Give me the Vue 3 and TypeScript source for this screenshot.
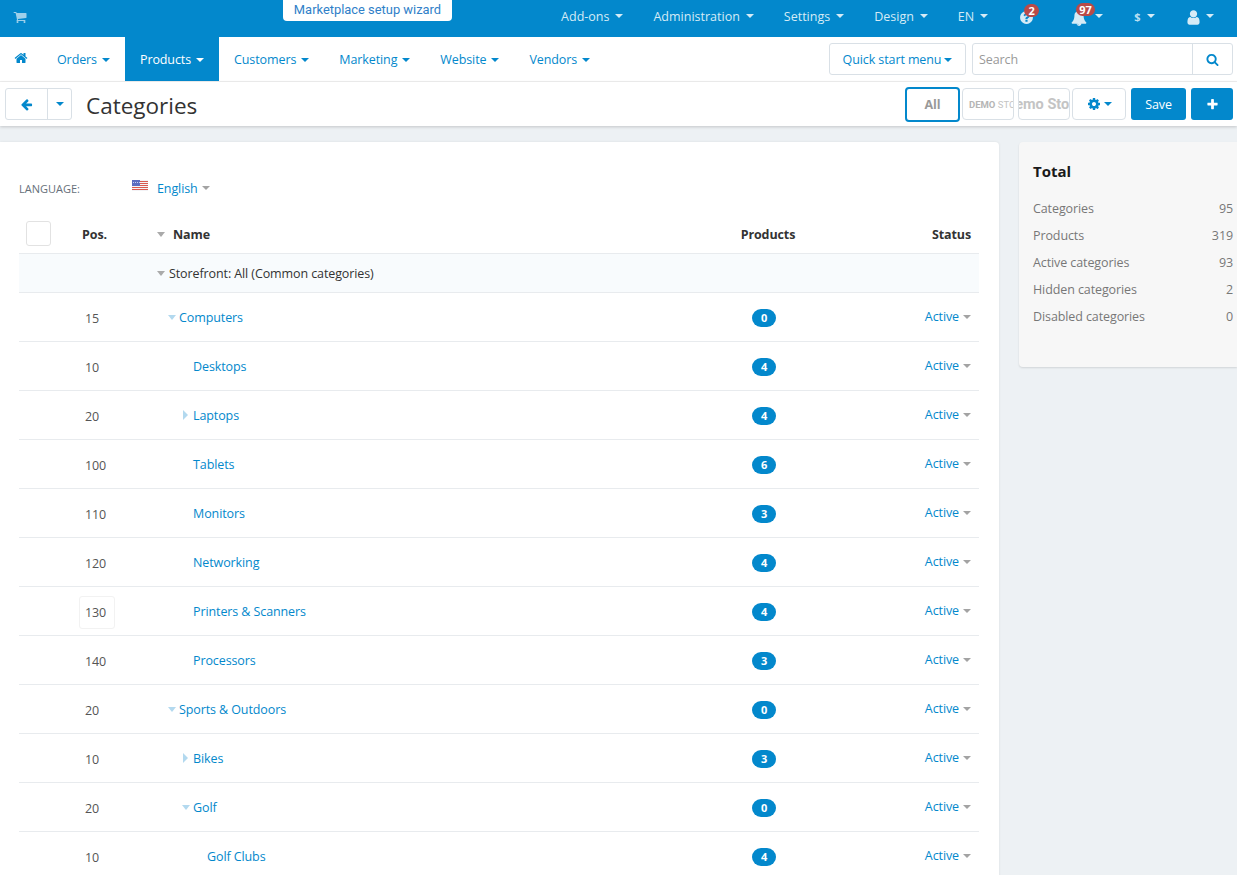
<script setup lang="ts">
interface CategoryRow {
  pos: number;
  name: string;
  level: number;
  products: number;
  toggle?: "open" | "closed";
  focused?: boolean;
}

const adminMenu = ["Add-ons", "Administration", "Settings", "Design", "EN"];
const mainMenu = ["Orders", "Products", "Customers", "Marketing", "Website", "Vendors"];

const rows: CategoryRow[] = [
  { pos: 15, name: "Computers", level: 0, products: 0, toggle: "open" },
  { pos: 10, name: "Desktops", level: 1, products: 4 },
  { pos: 20, name: "Laptops", level: 1, products: 4, toggle: "closed" },
  { pos: 100, name: "Tablets", level: 1, products: 6 },
  { pos: 110, name: "Monitors", level: 1, products: 3 },
  { pos: 120, name: "Networking", level: 1, products: 4 },
  { pos: 130, name: "Printers & Scanners", level: 1, products: 4, focused: true },
  { pos: 140, name: "Processors", level: 1, products: 3 },
  { pos: 20, name: "Sports & Outdoors", level: 0, products: 0, toggle: "open" },
  { pos: 10, name: "Bikes", level: 1, products: 3, toggle: "closed" },
  { pos: 20, name: "Golf", level: 1, products: 0, toggle: "open" },
  { pos: 10, name: "Golf Clubs", level: 2, products: 4 },
];

const totals = [
  { label: "Categories", value: 95 },
  { label: "Products", value: 319 },
  { label: "Active categories", value: 93 },
  { label: "Hidden categories", value: 2 },
  { label: "Disabled categories", value: 0 },
];

const icons = {
  cart: "M704 1536q0 52-38 90t-90 38-90-38-38-90 38-90 90-38 90 38 38 90zm896 0q0 52-38 90t-90 38-90-38-38-90 38-90 90-38 90 38 38 90zm128-1088v512q0 24-16.500 42.500t-40.500 21.500l-1044 122q13 60 13 70 0 16-24 64h920q26 0 45 19t19 45-19 45-45 19h-1024q-26 0-45-19t-19-45q0-11 8-31.500t16-36 21.500-40 15.500-29.500l-177-823h-204q-26 0-45-19t-19-45 19-45 45-19h256q16 0 28.500 6.500t19.500 15.500 13 24.500 8 26 5.500 29.500 4.500 26h1201q26 0 45 19t19 45z",
  home: "M1472 992v480q0 26-19 45t-45 19h-384v-384h-256v384h-384q-26 0-45-19t-19-45v-480q0-1 .5-3t.5-3l575-474 575 474q1 2 1 6zm223-69l-62 74q-8 9-21 11h-3q-13 0-21-7l-692-577-692 577q-12 8-24 7-13-2-21-11l-62-74q-8-10-7-23.500t11-21.500l719-599q32-26 76-26t76 26l244 204v-195q0-14 9-23t23-9h192q14 0 23 9t9 23v408l219 182q10 8 11 21.500t-7 23.500z",
  back: "M1664 896v128q0 53-32.500 90.500t-84.500 37.500h-704l293 294q38 36 38 90t-38 90l-75 76q-37 37-90 37-52 0-91-37l-651-652q-37-37-37-90 0-52 37-91l651-650q38-38 91-38 52 0 90 38l75 74q38 38 38 91t-38 91l-293 293h704q52 0 84.500 37.500t32.500 90.500z",
  search: "M1216 832q0-185-131.500-316.500t-316.500-131.500-316.500 131.500-131.500 316.500 131.500 316.500 316.500 131.500 316.500-131.500 131.500-316.500zm512 832q0 52-38 90t-90 38q-54 0-90-38l-343-342q-179 124-399 124-143 0-273.500-55.500t-225-150-150-225-55.500-273.500 55.500-273.500 150-225 225-150 273.500-55.500 273.500 55.500 225 150 150 225 55.500 273.500q0 220-124 399l343 343q37 37 37 90z",
  plus: "M1600 736v192q0 40-28 68t-68 28h-416v416q0 40-28 68t-68 28h-192q-40 0-68-28t-28-68v-416h-416q-40 0-68-28t-28-68v-192q0-40 28-68t68-28h416v-416q0-40 28-68t68-28h192q40 0 68 28t28 68v416h416q40 0 68 28t28 68z",
  cog: "M1152 896q0-106-75-181t-181-75-181 75-75 181 75 181 181 75 181-75 75-181zm512-109v222q0 12-8 23t-20 13l-185 28q-19 54-39 91 35 50 107 138 10 12 10 25t-9 23q-27 37-99 108t-94 71q-12 0-26-9l-138-108q-44 23-91 38-16 136-29 186-7 28-36 28h-222q-14 0-24.500-8.500t-11.500-21.500l-28-184q-49-16-90-37l-141 107q-10 9-25 9-14 0-25-11-126-114-165-168-7-10-7-23 0-12 8-23 15-21 51-66.500t54-70.500q-27-50-41-99l-183-27q-13-2-21-12.500t-8-23.500v-222q0-12 8-23t19-13l186-28q14-46 39-92-40-57-107-138-10-12-10-24 0-10 9-23 26-36 98.500-107.500t94.500-71.500q13 0 26 10l138 107q44-23 91-38 16-136 29-186 7-28 36-28h222q14 0 24.500 8.500t11.500 21.500l28 184q49 16 90 37l142-107q9-9 24-9 13 0 25 10 129 119 165 170 7 8 7 22 0 12-8 23-15 21-51 66.500t-54 70.500q26 50 41 98l183 28q13 2 21 12.500t8 23.500z",
  bell: "M912 1696q0-16-16-16-59 0-101.500-42.500t-42.500-101.500q0-16-16-16t-16 16q0 73 51.500 124.500t124.500 51.500q16 0 16-16zm816-288q0 52-38 90t-90 38h-448q0 106-75 181t-181 75-181-75-75-181h-448q-52 0-90-38t-38-90q50-42 91-88t85-119.500 74.500-158.500 50-206 19.500-260q0-152 117-282.500t307-158.500q-8-19-8-39 0-40 28-68t68-28 68 28 28 68q0 20-8 39 190 28 307 158.500t117 282.500q0 139 19.500 260t50 206 74.500 158.500 85 119.500 91 88z",
  user: "M1536 1399q0 109-62.500 187t-150.500 78h-854q-88 0-150.500-78t-62.500-187q0-85 8.500-160.500t31.500-152 58.500-131 94-89 134.500-34.500q131 128 313 128t313-128q76 0 134.500 34.500t94 89 58.500 131 31.500 152 8.500 160.500zm-256-887q0 159-112.500 271.500t-271.500 112.500-271.500-112.500-112.500-271.500 112.500-271.500 271.500-112.500 271.500 112.500 112.500 271.500z",
  help: "M1024 1376v-192q0-14-9-23t-23-9h-192q-14 0-23 9t-9 23v192q0 14 9 23t23 9h192q14 0 23-9t9-23zm256-672q0-88-55.500-163t-138.500-116-170-41q-243 0-371 213-15 24 8 42l132 100q7 6 19 6 16 0 25-12 53-68 86-92 34-24 86-24 48 0 85.500 26t37.500 59q0 38-20 61t-68 45q-63 28-115.500 86.500t-52.500 125.500v36q0 14 9 23t23 9h192q14 0 23-9t9-23q0-19 21.500-49.500t54.500-49.500q32-18 49-28.500t46-35 44.500-48 28-60.500 12.500-81zm384 192q0 209-103 385.500t-279.500 279.500-385.500 103-385.500-103-279.500-279.500-103-385.500 103-385.500 279.500-279.500 385.500-103 385.500 103 279.500 279.500 103 385.500z",
};

const flagStripes = [0, 2, 4, 6, 8];
const flagStars = [1, 3, 5, 7];
</script>

<template>
  <div class="page">
    <header class="topbar">
      <svg class="cart" viewBox="0 0 1792 1792"><path :d="icons.cart" /></svg>
      <a class="wizard">Marketplace setup wizard</a>
      <nav class="admin">
        <span v-for="item in adminMenu" :key="item" class="admin-item">{{ item }}<i class="caret" /></span>
        <span class="admin-item icon-item help">
          <svg viewBox="0 0 1792 1792"><path :d="icons.help" /></svg>
          <b class="count">2</b>
        </span>
        <span class="admin-item icon-item bell">
          <svg viewBox="0 0 1792 1792"><path :d="icons.bell" /></svg>
          <b class="count">97</b>
          <i class="caret" />
        </span>
        <span class="admin-item currency">$<i class="caret" /></span>
        <span class="admin-item icon-item user">
          <svg viewBox="0 0 1792 1792"><path :d="icons.user" /></svg>
          <i class="caret" />
        </span>
      </nav>
    </header>

    <div class="mainnav">
      <a class="home"><svg viewBox="0 0 1792 1792"><path :d="icons.home" /></svg></a>
      <a v-for="item in mainMenu" :key="item" class="tab" :class="{ active: item === 'Products' }">
        {{ item }}<i class="caret" />
      </a>
      <div class="nav-right">
        <button class="quick">Quick start menu<i class="caret" /></button>
        <div class="search">
          <span class="placeholder">Search</span>
          <span class="search-btn"><svg viewBox="0 0 1792 1792"><path :d="icons.search" /></svg></span>
        </div>
      </div>
    </div>

    <div class="toolbar">
      <div class="back-group">
        <span class="back"><svg viewBox="0 0 1792 1792"><path :d="icons.back" /></svg></span>
        <span class="back-more"><i class="caret" /></span>
      </div>
      <h1>Categories</h1>
      <div class="actions">
        <span class="vendor all">All</span>
        <span class="vendor logo small"><span><b>DEMO</b> STORE</span></span>
        <span class="vendor logo big"><span>Demo Store</span></span>
        <span class="btn-cog"><svg viewBox="0 0 1792 1792"><path :d="icons.cog" /></svg><i class="caret" /></span>
        <span class="btn-save">Save</span>
        <span class="btn-add"><svg viewBox="0 0 1792 1792"><path :d="icons.plus" /></svg></span>
      </div>
    </div>

    <div class="content">
      <main class="card">
        <div class="language">
          <span class="language-label">Language:</span>
          <svg class="flag" viewBox="0 0 16 11">
            <rect width="16" height="11" fill="#f3f3f6" />
            <rect v-for="y in flagStripes" :key="y" :y="y + 1" width="16" height="1" fill="#d9594f" />
            <rect width="8" height="6" fill="#5a6cc0" />
            <rect v-for="x in flagStars" :key="x" :x="x" y="2" width="1" height="1" fill="#c5cdf0" />
          </svg>
          <a class="language-value">English</a>
          <i class="caret gray" />
        </div>

        <div class="table">
          <div class="row head">
            <span class="checkbox" />
            <span class="pos-head">Pos.</span>
            <span class="name-head"><i class="caret gray big" />Name</span>
            <span class="center products-head">Products</span>
            <span class="right">Status</span>
          </div>
          <div class="row storefront">
            <span />
            <span />
            <span class="storefront-name"><i class="caret gray big" />Storefront: All (Common categories)</span>
          </div>
          <div v-for="row in rows" :key="row.name" class="row item">
            <span />
            <span class="pos" :class="{ focused: row.focused }">{{ row.pos }}</span>
            <span class="tree" :class="`level-${row.level}`">
              <span class="slot"><i v-if="row.toggle" class="toggle" :class="row.toggle" /></span>
              <a>{{ row.name }}</a>
            </span>
            <span class="center"><b class="badge">{{ row.products }}</b></span>
            <span class="right status"><a>Active</a><i class="caret gray" /></span>
          </div>
        </div>
      </main>

      <aside class="sidebar">
        <h3>Total</h3>
        <div v-for="item in totals" :key="item.label" class="total">
          <span>{{ item.label }}</span>
          <span>{{ item.value }}</span>
        </div>
      </aside>
    </div>
  </div>
</template>

<style>
html,
body {
  margin: 0;
  overflow: hidden;
}
</style>

<style scoped>
.page {
  width: 1237px;
  height: 875px;
  overflow: hidden;
  display: flex;
  flex-direction: column;
  background: #edf1f4;
  font-family: "Open Sans", "Noto Sans", sans-serif;
  font-size: 12.5px;
  letter-spacing: -0.1px;
  color: #333;
}

a {
  color: #0388cc;
}

svg {
  display: block;
  fill: currentColor;
}

.caret {
  display: inline-block;
  width: 0;
  height: 0;
  margin-left: 5px;
  vertical-align: 2px;
  border-top: 4px solid currentColor;
  border-left: 4px solid transparent;
  border-right: 4px solid transparent;
}

.caret.gray {
  color: #a3a3a3;
  margin-left: 4px;
  border-width: 4px 4px 0;
}

.caret.big {
  color: #aaa;
  margin: 0 7px 0 0;
  border-width: 5px 4.5px 0;
  vertical-align: 2px;
}

/* top bar */
.topbar {
  position: relative;
  flex: none;
  height: 37px;
  display: flex;
  align-items: center;
  background: #0388cc;
  color: #d5ebf6;
}

.cart {
  width: 14px;
  height: 14px;
  margin: 0 0 3px 13px;
  color: #9fd0ea;
}

.wizard {
  position: absolute;
  left: 283px;
  top: 0;
  box-sizing: border-box;
  width: 169px;
  height: 21px;
  padding-top: 1px;
  background: #fff;
  border-radius: 0 0 4px 4px;
  text-align: center;
  font-family: Roboto, sans-serif;
  font-size: 12.9px;
  letter-spacing: 0;
  line-height: 17px;
  color: #2f80c8;
}

.admin {
  margin-left: auto;
  display: flex;
  align-items: center;
  box-sizing: border-box;
  height: 100%;
  padding: 0 23.5px 4px 0;
  letter-spacing: 0;
}

.admin-item {
  display: inline-flex;
  align-items: center;
  margin-left: 30px;
  white-space: nowrap;
}

.admin-item .caret {
  margin-left: 6px;
  margin-top: -2px;
}

.icon-item {
  position: relative;
}

.icon-item svg {
  margin-top: 2px;
}

.help {
  margin-left: 31px;
}

.help svg {
  width: 15px;
  height: 15px;
}

.bell {
  margin-left: 36.5px;
}

.bell svg {
  width: 16px;
  height: 16px;
}

.bell .caret {
  margin-left: 8.5px;
}

.currency {
  margin-left: 31px;
  color: #b9dff2;
  font-weight: 700;
  font-size: 11px;
}

.currency .caret {
  margin-left: 6px;
  color: #d5ebf6;
}

.user {
  margin-left: 30px;
}

.user svg {
  width: 17px;
  height: 17px;
}

.user .caret {
  margin-left: 4px;
}

.count {
  position: absolute;
  top: -4px;
  left: 5px;
  box-sizing: border-box;
  min-width: 15px;
  padding: 0 3px;
  height: 13px;
  line-height: 13px;
  border-radius: 7px;
  background: #b94a48;
  color: #fff;
  font-size: 11px;
  text-align: center;
}

.bell .count {
  left: 5.5px;
  top: -4.5px;
}

/* main nav */
.mainnav {
  flex: none;
  height: 44px;
  display: flex;
  align-items: stretch;
  background: #fff;
  border-bottom: 1px solid #f0f0f0;
}

.home {
  display: flex;
  align-items: center;
  padding: 0 14px;
}

.home svg {
  width: 14px;
  height: 14px;
  margin-top: -2px;
}

.tab {
  display: flex;
  align-items: center;
  padding: 0 15px;
  white-space: nowrap;
}

.tab .caret {
  margin-top: 1px;
  vertical-align: 0;
}

.tab.active {
  background: #0388cc;
  color: #fff;
}

.nav-right {
  margin-left: auto;
  display: flex;
  align-items: center;
  gap: 6px;
  padding: 0 4px 0 0;
}

.quick {
  box-sizing: border-box;
  width: 137px;
  height: 32px;
  padding: 0;
  background: #fff;
  border: 1px solid #d9e0e6;
  border-radius: 3px;
  font: inherit;
  letter-spacing: inherit;
  color: #0388cc;
}

.quick .caret {
  margin-left: 3px;
  vertical-align: 2px;
}

.search {
  box-sizing: border-box;
  width: 261px;
  height: 32px;
  display: flex;
  align-items: center;
  border: 1px solid #d9e0e6;
  border-radius: 3px;
}

.placeholder {
  flex: 1;
  padding-left: 6px;
  color: #999;
}

.search-btn {
  width: 39px;
  height: 100%;
  display: flex;
  align-items: center;
  justify-content: center;
  border-left: 1px solid #d9e0e6;
  color: #0388cc;
}

.search-btn svg {
  width: 13px;
  height: 13px;
}

/* toolbar */
.toolbar {
  flex: none;
  height: 44px;
  display: flex;
  align-items: center;
  background: #fff;
  box-shadow: 0 1px 3px rgba(0, 0, 0, 0.18);
  position: relative;
}

.back-group {
  margin-left: 5px;
  display: flex;
  box-sizing: border-box;
  width: 67px;
  height: 32px;
  border: 1px solid #d9e0e6;
  border-radius: 3px;
  color: #0388cc;
}

.back {
  width: 41px;
  display: flex;
  align-items: center;
  justify-content: center;
  border-right: 1px solid #d9e0e6;
}

.back svg {
  width: 13px;
  height: 13px;
  margin-left: -1px;
}

.back-more {
  flex: 1;
  display: flex;
  align-items: center;
  justify-content: center;
}

.back-more .caret {
  margin: 0;
  border-width: 4px 4px 0;
}

h1 {
  margin: 2px 0 0 14px;
  font-size: 22.5px;
  font-weight: 400;
  letter-spacing: 0;
  color: #333;
}

.actions {
  margin-left: auto;
  padding-right: 4px;
  display: flex;
  align-items: center;
  gap: 5px;
}

.vendor,
.btn-cog {
  box-sizing: border-box;
  height: 32px;
  display: flex;
  align-items: center;
  justify-content: center;
  background: #fff;
  border: 1px solid #d9e0e6;
  border-radius: 4px;
}

.vendor.all {
  width: 55px;
  height: 35px;
  border: 2px solid #0388cc;
  margin-right: -3px;
  font-weight: 700;
  color: #999;
}

.logo {
  width: 52px;
  overflow: hidden;
  white-space: nowrap;
  font-family: Roboto, sans-serif;
  font-weight: 700;
  letter-spacing: 0;
  color: #c4c4c4;
}

.logo.small {
  font-size: 9.5px;
  justify-content: flex-start;
  padding-left: 6px;
}

.logo.small b {
  color: #b5b5b5;
}

.logo.small span {
  font-weight: 400;
}

.logo.big {
  font-size: 14.5px;
  margin-left: -1px;
  margin-right: -3px;
}

.logo.big span {
  flex: none;
}

.btn-cog {
  width: 54px;
  color: #0388cc;
}

.btn-cog svg {
  width: 14px;
  height: 14px;
}

.btn-cog .caret {
  margin-left: 3px;
  border-width: 4px 4px 0;
}

.btn-save,
.btn-add {
  height: 32px;
  display: flex;
  align-items: center;
  justify-content: center;
  background: #0388cc;
  border-radius: 3px;
  color: #fff;
}

.btn-save {
  width: 55px;
}

.btn-add {
  width: 42px;
}

.btn-add svg {
  width: 13px;
  height: 13px;
}

/* content */
.content {
  flex: 1;
  min-height: 0;
  display: flex;
  align-items: flex-start;
  gap: 20px;
  padding-top: 16px;
}

.card {
  box-sizing: border-box;
  width: 999px;
  height: 800px;
  padding: 0 20px 0 19px;
  background: #fff;
  border-radius: 0 4px 0 0;
  box-shadow: 0 0 3px rgba(0, 0, 0, 0.08);
}

.language {
  height: 72px;
  display: flex;
  align-items: center;
  padding-top: 20px;
  box-sizing: border-box;
}

.language-label {
  width: 113px;
  font-size: 11px;
  letter-spacing: 0;
  text-transform: uppercase;
  color: #66707a;
}

.flag {
  width: 16px;
  height: 11px;
  margin: -5px 9px 0 0;
}

.language-value {
  color: #0388cc;
}

.row {
  display: grid;
  grid-template-columns: 66px 72px 552px 110px 160px;
  align-items: center;
  box-sizing: border-box;
  border-bottom: 1px solid #e8ebee;
}

.head {
  height: 40px;
  font-weight: 700;
  color: #333;
}

.head span:not(.checkbox) {
  padding-top: 2px;
}

.checkbox {
  box-sizing: border-box;
  width: 25px;
  height: 25px;
  margin-left: 7px;
  border: 1px solid #e2e2e2;
  border-radius: 3px;
}

.pos-head {
  margin-left: -3px;
  grid-column: 2;
}

.name-head .caret.big {
  margin-right: 8px;
}

.center {
  grid-column: 4;
  text-align: center;
}

.products-head {
  padding-left: 8px;
  white-space: nowrap;
}

.right {
  grid-column: 5;
  text-align: right;
  padding-right: 8px;
}

.storefront {
  height: 39px;
  background: #f8fbfd;
}

.storefront-name {
  grid-column: 3;
  white-space: nowrap;
}

.storefront-name .caret.big {
  margin-right: 4px;
}

.item {
  height: 49px;
}

.pos {
  grid-column: 2;
  margin-left: -6px;
  margin-top: 2px;
  box-sizing: border-box;
  width: 36px;
  height: 33px;
  line-height: 31px;
  padding-left: 5px;
  border: 1px solid transparent;
  border-radius: 3px;
  color: #555;
}

.pos.focused {
  border-color: #f2f2f2;
}

.tree {
  display: flex;
  align-items: center;
  grid-column: 3;
}

.level-0 {
  padding-left: 10px;
}

.level-1 {
  padding-left: 24px;
}

.level-2 {
  padding-left: 38px;
}

.slot {
  width: 12px;
  flex: none;
}

.toggle {
  display: block;
  width: 0;
  height: 0;
  margin-left: 1px;
}

.toggle.open {
  border-top: 5px solid #b3d9ef;
  border-left: 4.5px solid transparent;
  border-right: 4.5px solid transparent;
}

.toggle.closed {
  margin-left: 2px;
  border-left: 5px solid #b3d9ef;
  border-top: 5px solid transparent;
  border-bottom: 5px solid transparent;
}

.badge {
  display: inline-block;
  width: 24px;
  height: 18px;
  margin-top: 2px;
  line-height: 18px;
  border-radius: 9px;
  background: #0388cc;
  color: #fff;
  font-size: 11px;
}

.status {
  padding-bottom: 2px;
}

/* sidebar */
.sidebar {
  box-sizing: border-box;
  width: 218px;
  height: 225px;
  padding: 19px 4px 0 14px;
  background: #f7f7f7;
  border-radius: 4px 0 0 4px;
  box-shadow: 0 1px 2px rgba(0, 0, 0, 0.12);
}

h3 {
  margin: 0 0 14px;
  font-size: 15px;
  font-weight: 700;
  letter-spacing: 0;
  line-height: 20px;
  color: #1a1a1a;
}

.total {
  display: flex;
  justify-content: space-between;
  height: 27px;
  line-height: 27px;
  color: #777;
}
</style>
